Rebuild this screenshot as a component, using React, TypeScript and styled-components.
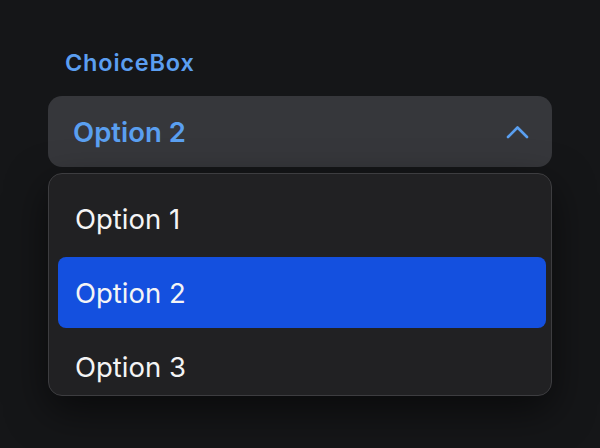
import styled, { createGlobalStyle } from "styled-components";

const GlobalStyle = createGlobalStyle`
  html, body {
    margin: 0;
    padding: 0;
    background: #151618;
  }
  body {
    font-family: Inter, "Noto Sans", sans-serif;
    -webkit-font-smoothing: antialiased;
  }
`;

const Page = styled.div`
  width: 600px;
  height: 448px;
  box-sizing: border-box;
  padding: 48px 48px 0 48px;
  background: #151618;
  overflow: hidden;
`;

const Label = styled.div`
  padding-left: 17px;
  height: 30px;
  line-height: 30px;
  font-size: 23.5px;
  font-weight: 600;
  letter-spacing: 0.8px;
  color: #5b9ef0;
  margin-bottom: 18px;
`;

const Trigger = styled.div`
  height: 71px;
  box-sizing: border-box;
  display: flex;
  align-items: center;
  justify-content: space-between;
  padding: 0 23px 0 25px;
  background: #36373b;
  border-radius: 14px;
  color: #5a9ff0;
  font-size: 27.5px;
  font-weight: 600;
`;

const Panel = styled.div`
  margin-top: 6px;
  height: 223px;
  box-sizing: border-box;
  border: 1px solid #3d3d40;
  border-radius: 14px;
  background: #212123;
  padding: 9px 5px 0 9px;
  overflow: hidden;
  display: flex;
  flex-direction: column;
  gap: 3px;
  box-shadow: 0 14px 40px rgba(0, 0, 0, 0.55);
`;

const Item = styled.div<{ $active?: boolean }>`
  flex: 0 0 71px;
  display: flex;
  align-items: center;
  padding-left: 17px;
  border-radius: 8px;
  font-size: 27.5px;
  font-weight: 400;
  color: #f4f4f5;
  background: ${(p) => (p.$active ? "#1450df" : "transparent")};
`;

const Chevron = () => (
  <svg width="23" height="14" viewBox="0 0 23 14" fill="none">
    <path
      d="M2 12L11.5 2.5L21 12"
      stroke="#5a9ff0"
      strokeWidth="2.6"
      strokeLinecap="round"
      strokeLinejoin="round"
    />
  </svg>
);

const options = ["Option 1", "Option 2", "Option 3"];

export default function App() {
  const selected = "Option 2";
  return (
    <Page>
      <GlobalStyle />
      <Label>ChoiceBox</Label>
      <Trigger>
        <span>{selected}</span>
        <Chevron />
      </Trigger>
      <Panel>
        {options.map((o) => (
          <Item key={o} $active={o === selected}>
            {o}
          </Item>
        ))}
      </Panel>
    </Page>
  );
}
